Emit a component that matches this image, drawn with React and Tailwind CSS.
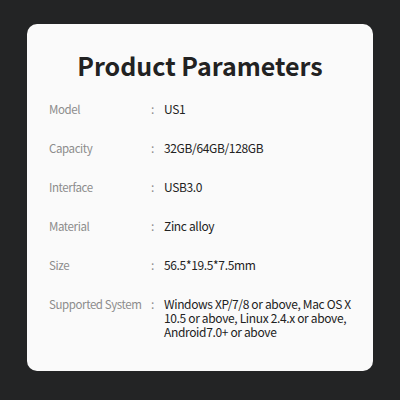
import React from "react";

const rows = [
  { label: "Model", value: "US1" },
  { label: "Capacity", value: "32GB/64GB/128GB" },
  { label: "Interface", value: "USB3.0" },
  { label: "Material", value: "Zinc alloy" },
  { label: "Size", value: "56.5*19.5*7.5mm" },
  {
    label: "Supported System",
    value: "Windows XP/7/8 or above, Mac OS X 10.5 or above, Linux 2.4.x or above, Android7.0+ or above",
  },
];

const App = () => {
  return (
    <div
      className="w-[400px] h-[400px] bg-[#232425] pt-[24px] px-[27px]"
      style={{ fontFamily: '"Noto Sans CJK SC", "Noto Sans", sans-serif' }}
    >
      <div className="h-[347px] rounded-[10px] bg-[#fafafa] pt-[26px] px-[22px]">
        <h1 className="text-center text-[25px] leading-[30px] font-bold text-[#222]">
          Product Parameters
        </h1>
        <div className="mt-[22px] flex flex-col gap-[25px]">
          {rows.map((row) => (
            <div key={row.label} className="flex leading-[14px]">
              <span className="w-[102px] shrink-0 text-[11.5px] tracking-[-0.4px] text-[#8c8c8c]">
                {row.label}
              </span>
              <span className="w-[13px] shrink-0 text-[12px] text-[#8c8c8c]">:</span>
              <span className="w-[192px] text-[12px] tracking-[-0.35px] text-[#222]">{row.value}</span>
            </div>
          ))}
        </div>
      </div>
    </div>
  );
};

export default App;
